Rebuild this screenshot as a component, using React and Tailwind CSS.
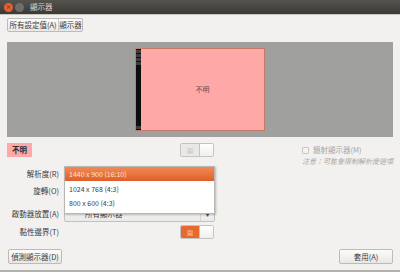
import React from "react";

const font = { fontFamily: '"Noto Sans CJK TC", "Noto Sans", sans-serif' };

function Btn({ children, className = "" }) {
  return (
    <div
      className={
        "flex items-center justify-center rounded-[2px] border border-[#bdbbb6] bg-gradient-to-b from-[#fbfbfa] to-[#e9e8e6] text-[7.5px] text-[#3c3c3c] " +
        className
      }
    >
      {children}
    </div>
  );
}

function Switch({ on }) {
  return (
    <div className="flex h-[14px] w-[34px] overflow-hidden rounded-[2px] border border-[#c6c4bf]">
      <div
        className={
          "flex w-[18px] items-center justify-center text-[6px] " +
          (on ? "bg-[#e8692f] text-[#f7c8b0]" : "bg-[#e9e8e6] text-[#c3c1bd]")
        }
      >
        開
      </div>
      <div className="flex-1 border-l border-[#c6c4bf] bg-gradient-to-b from-white to-[#f0efed]" />
    </div>
  );
}

export default function App() {
  return (
    <div className="h-[272px] w-[400px] overflow-hidden bg-[#f2f1f0]" style={font}>
      {/* title bar */}
      <div className="flex h-[14px] items-center bg-gradient-to-b from-[#54534e] to-[#3b3a36] pl-[4px]">
        <div className="h-[9px] w-[9px] rounded-full bg-[#e85e37] flex items-center justify-center text-[6px] leading-none text-[#5a2010]">
          ×
        </div>
        <div className="ml-[2px] h-[9px] w-[9px] rounded-full bg-[#6e6d68]" />
        <div className="ml-[6px] text-[7.5px] text-[#dfdbd2]">顯示器</div>
      </div>
      <div className="h-[1px] bg-[#c9c7c2]" />

      <div className="relative px-[7px]">
        {/* top buttons */}
        <div className="mt-[3px] flex h-[14px] w-[76px] rounded-[2px] border border-[#bdbbb6] bg-gradient-to-b from-[#fbfbfa] to-[#e9e8e6] text-[7.5px] text-[#3c3c3c]">
          <div className="flex w-[51px] items-center justify-center border-r border-[#d0cec9]">所有設定值(A)</div>
          <div className="flex flex-1 items-center justify-center">顯示器</div>
        </div>

        {/* monitor area */}
        <div className="mt-[10px] flex h-[95px] items-center justify-center bg-[#a0a09f]">
          <div className="flex h-[83px] w-[130px] border border-[#c47a66] bg-[#ffa8a8]">
            <div className="flex w-[5px] flex-col gap-[1px] bg-[#0d0d0d] pt-[1px]">
              <div className="h-[3px] bg-[#3d3d3d]" />
              <div className="h-[3px] bg-[#3d3d3d]" />
              <div className="h-[3px] bg-[#3d3d3d]" />
              <div className="h-[3px] bg-[#3d3d3d]" />
              <div className="flex-1" />
              <div className="mb-[1px] h-[3px] bg-[#3d3d3d]" />
            </div>
            <div className="flex flex-1 items-center justify-center text-[7px] text-[#6b4a4a]">不明</div>
          </div>
        </div>

        {/* name row */}
        <div className="mt-[6px] flex h-[14px] items-center">
          <div className="flex h-[14px] w-[25px] items-center justify-center bg-[#ffa8a8] text-[7.5px] font-bold text-[#2d2d2d]">
            不明
          </div>
          <div className="ml-[148px]">
            <Switch on={false} />
          </div>
          <div className="ml-[88px] flex items-center gap-[4px] text-[7.5px] text-[#a8a6a2]">
            <div className="h-[7px] w-[7px] rounded-[1px] border border-[#c8c6c2] bg-[#f4f3f2]" />
            鏡射顯示器(M)
          </div>
        </div>
        <div className="flex h-[8px] justify-end text-[7px] italic leading-[8px] text-[#a8a6a2]">
          注意：可能會限制解析度選項
        </div>

        {/* form rows */}
        <div className="flex h-[17px] items-center">
          <div className="w-[52px] text-right text-[7.5px] text-[#3c3c3c]">解析度(R)</div>
        </div>
        <div className="flex h-[17px] items-center">
          <div className="w-[52px] text-right text-[7.5px] text-[#3c3c3c]">旋轉(O)</div>
        </div>
        <div className="mt-[7px] flex h-[16px] items-center">
          <div className="w-[52px] text-right text-[7.5px] text-[#3c3c3c]">啟動器放置(A)</div>
          <div className="ml-[5px] flex h-[16px] w-[151px] items-center rounded-[2px] border border-[#c4c2bd] bg-gradient-to-b from-[#fafaf9] to-[#ebeae8] text-[7.5px] text-[#3c3c3c]">
            <div className="flex-1 pl-[20px]">所有顯示器</div>
            <div className="flex h-full w-[14px] items-center justify-center border-l border-[#d6d4d0] text-[5px] text-[#555]">
              ▼
            </div>
          </div>
        </div>
        <div className="mt-[2px] flex h-[16px] items-center">
          <div className="w-[52px] text-right text-[7.5px] text-[#3c3c3c]">黏性邊界(T)</div>
          <div className="ml-[121px]">
            <Switch on={true} />
          </div>
        </div>

        {/* bottom buttons */}
        <div className="mt-[9px] flex items-center justify-between pl-[1px]">
          <Btn className="h-[15px] w-[54px]">偵測顯示器(D)</Btn>
          <Btn className="h-[15px] w-[54px]">套用(A)</Btn>
        </div>

        {/* dropdown menu */}
        <div className="absolute left-[64px] top-[148px] w-[151px] border border-[#b9b7b2] bg-white shadow-[1px_1px_2px_rgba(0,0,0,0.25)] text-[7px] text-[#3c3c3c]">
          <div className="flex h-[14px] items-center bg-gradient-to-b from-[#f08a55] to-[#df5f27] pl-[4px] text-[#fde6da]">
            1440 x 900 (16:10)
          </div>
          <div className="flex h-[14px] items-center pl-[4px] mt-[1px]">1024 x 768 (4:3)</div>
          <div className="flex h-[14px] items-center pl-[4px]">800 x 600 (4:3)</div>
          <div className="h-[3px]" />
        </div>
      </div>
      <div className="mt-[6px] h-[2px] bg-[#b3b1ac]" />
    </div>
  );
}
